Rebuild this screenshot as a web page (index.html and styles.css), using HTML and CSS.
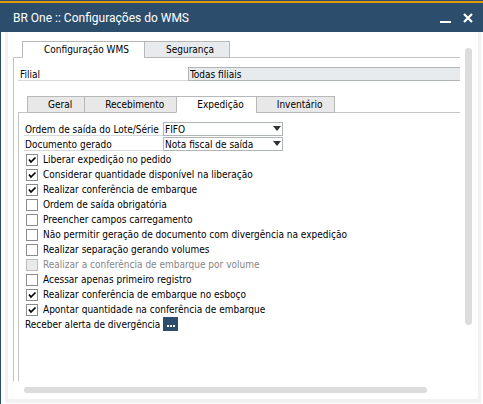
FILE: index.html
```
<!DOCTYPE html>
<html lang="pt-BR">
<head>
<meta charset="utf-8">
<meta name="viewport" content="width=device-width, initial-scale=1">
<title>BR One :: Configurações do WMS</title>
<link rel="stylesheet" href="styles.css">
</head>
<body>
<main class="window">
  <header class="titlebar">
    <h1 class="title">BR One :: Configurações do WMS</h1>
    <button class="winbtn" type="button" aria-label="Minimizar"><svg width="11" height="10" viewBox="0 0 11 10"><path d="M0 8h11v2H0z" fill="#fff"/></svg></button>
    <button class="winbtn" type="button" aria-label="Fechar"><svg width="10" height="10" viewBox="0 0 10 10"><path d="M1 1l8 8M9 1l-8 8" stroke="#fff" stroke-width="2.2"/></svg></button>
  </header>
  <div class="frame">
    <div class="client">
      <div class="content">
        <nav class="tabs tabs-main">
          <button class="tab active" type="button">Configuração WMS</button>
          <button class="tab" type="button">Segurança</button>
        </nav>
        <section class="panel">
          <div class="field branch">
            <label class="caption" for="filial">Filial</label>
            <input class="text" id="filial" type="text" value="Todas filiais" readonly>
          </div>
          <nav class="tabs tabs-sub">
            <button class="tab" type="button">Geral</button>
            <button class="tab" type="button">Recebimento</button>
            <button class="tab active" type="button">Expedição</button>
            <button class="tab" type="button">Inventário</button>
          </nav>
          <section class="panel subpanel">
            <div class="field">
              <label class="caption" for="ordem">Ordem de saída do Lote/Série</label>
              <span class="combo"><select id="ordem"><option>FIFO</option></select></span>
            </div>
            <div class="field">
              <label class="caption" for="documento">Documento gerado</label>
              <span class="combo"><select id="documento"><option>Nota fiscal de saída</option></select></span>
            </div>
            <div class="checks">
              <label class="check"><input type="checkbox" checked>Liberar expedição no pedido</label>
              <label class="check"><input type="checkbox" checked>Considerar quantidade disponível na liberação</label>
              <label class="check"><input type="checkbox" checked>Realizar conferência de embarque</label>
              <label class="check"><input type="checkbox">Ordem de saída obrigatória</label>
              <label class="check"><input type="checkbox">Preencher campos carregamento</label>
              <label class="check"><input type="checkbox">Não permitir geração de documento com divergência na expedição</label>
              <label class="check"><input type="checkbox">Realizar separação gerando volumes</label>
              <label class="check disabled"><input type="checkbox" disabled>Realizar a conferência de embarque por volume</label>
              <label class="check"><input type="checkbox">Acessar apenas primeiro registro</label>
              <label class="check"><input type="checkbox" checked>Realizar conferência de embarque no esboço</label>
              <label class="check"><input type="checkbox" checked>Apontar quantidade na conferência de embarque</label>
            </div>
            <div class="field">
              <label class="caption plain" for="alerta">Receber alerta de divergência</label>
              <button class="more" id="alerta" type="button"><svg width="8" height="2" viewBox="0 0 8 2"><path d="M0 0h2v2H0zM3 0h2v2H3zM6 0h2v2H6z" fill="#fff"/></svg></button>
            </div>
          </section>
        </section>
      </div>
      <div class="vscroll"></div>
      <div class="hscroll"></div>
    </div>
  </div>
</main>
</body>
</html>
```
FILE: styles.css
```
* { box-sizing: border-box; }

body {
  margin: 0;
  background: #fff;
  color: #000;
  font: 10px/14px "DejaVu Sans Condensed", "DejaVu Sans", sans-serif;
}

button, input, select {
  margin: 0;
  font: inherit;
  color: inherit;
}

.window {
  display: flex;
  flex-direction: column;
  min-height: 100vh;
}

.titlebar {
  display: flex;
  align-items: center;
  gap: 12px;
  height: 32px;
  padding: 3px 10px 0 13px;
  background: linear-gradient(#2c4e6c 1px, #e09a0a 1px 3px, #2c4e6c 3px);
  color: #fff;
}

.title {
  flex: 1;
  margin: 0;
  font: 12px/16px Roboto, "Open Sans", sans-serif;
}

.winbtn {
  display: flex;
  padding: 0;
  border: 0;
  background: none;
}

.frame {
  flex: 1;
  display: flex;
  padding: 0 2px 1px 4px;
  border-left: 1px solid #2c4e6c;
}

.client {
  flex: 1;
  display: grid;
  grid-template-columns: minmax(0, 1fr) 7px;
  grid-template-rows: 1fr 6px;
  gap: 6px 5px;
  padding: 9px 6px 6px 5px;
  border: solid #f2f2f2;
  border-width: 0 3px 4px;
}

.content {
  display: flex;
  flex-direction: column;
}

.tabs { display: flex; }

.tabs::before, .tabs::after {
  content: "";
  border-bottom: 1px solid #c4c4c4;
}

.tabs::before { width: 9px; }
.tabs::after { flex: 1; }

.tab {
  height: 17px;
  padding: 0 12px 0 20px;
  border: 1px solid #b8b8b8;
  border-right-width: 0;
  background: #e8e8e8;
  line-height: 15px;
  white-space: nowrap;
}

.tabs-main .tab {
  padding: 0 15px 0 21px;
  background: #e7ebee;
}

.tab:last-child { border-right-width: 1px; }

.tabs .tab.active {
  border-bottom-color: #fff;
  background: #fff;
}

.panel {
  flex: 1;
  display: flex;
  flex-direction: column;
  padding: 9px 0 0 4px;
  border-left: 1px solid #c4c4c4;
}

.subpanel { padding: 9px 0 0 5px; }

.field {
  display: flex;
  height: 15px;
}

.caption {
  flex: none;
  width: 139px;
  height: 14px;
  padding-left: 1px;
  border-bottom: 1px solid #d5d9dc;
  line-height: 16px;
  white-space: nowrap;
}

.caption.plain { border-bottom: 0; }

.branch { margin-bottom: 14px; }
.branch .caption { width: 170px; padding-left: 2px; }

.text {
  flex: 1;
  min-width: 0;
  height: 14px;
  padding: 1px 1px 0;
  border: 1px solid #b0b5b8;
  border-right: 0;
  border-radius: 0;
  background: #e7ebee;
}

.combo {
  position: relative;
  width: 120px;
}

.combo::after {
  content: "";
  position: absolute;
  top: 4px;
  right: 2px;
  border: solid transparent;
  border-width: 5px 4px 0;
  border-top-color: #333;
  pointer-events: none;
}

.combo select {
  display: block;
  width: 100%;
  height: 14px;
  padding: 1px 12px 0 1px;
  appearance: none;
  border: 1px solid #b0b5b8;
  border-radius: 0;
  background: #fff;
  line-height: 12px;
}

.checks { padding-left: 2px; }

.check {
  display: flex;
  align-items: center;
  gap: 5px;
  height: 15px;
  white-space: nowrap;
}

.check input {
  width: 12px;
  height: 12px;
  appearance: none;
  border: 1px solid #8a8c8e;
  background: #fff;
}

.check input:checked {
  background: #fff url("data:image/svg+xml,%3Csvg xmlns='http://www.w3.org/2000/svg' viewBox='0 0 10 10'%3E%3Cpath d='M2 4.5L4 7L8.5 2.5' fill='none' stroke='%23000' stroke-width='1.7'/%3E%3C/svg%3E") center / 10px;
}

.disabled { color: #868686; }

.check input:disabled {
  border-color: #bbb;
  background: #eaeaea;
}

.more {
  display: flex;
  justify-content: center;
  align-items: flex-end;
  width: 15px;
  height: 14px;
  padding: 0 0 4px;
  border: 0;
  background: #2c4e6c;
}

.vscroll, .hscroll {
  border-radius: 4px;
  background: #dcdcdc;
}

.vscroll { margin: 7px 0 56px; }
.hscroll { margin: 0 33px 0 11px; }
```
